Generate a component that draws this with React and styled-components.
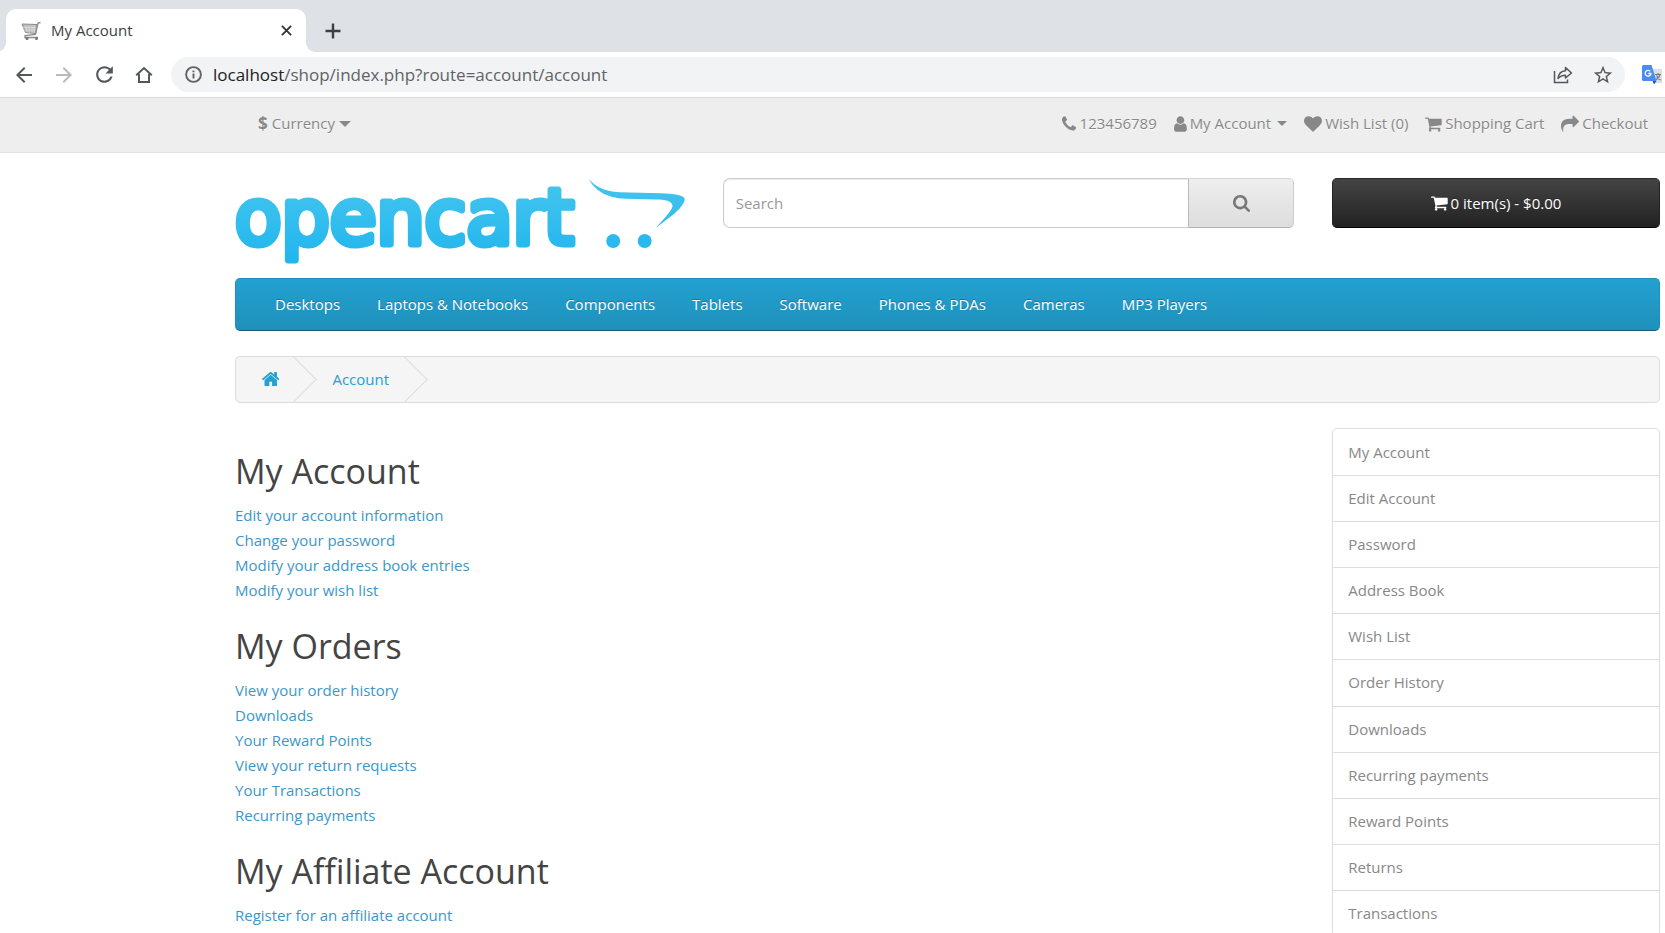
import React from 'react';
import styled, { createGlobalStyle } from 'styled-components';

const GlobalStyle = createGlobalStyle`
  *, *::before, *::after { box-sizing: border-box; }
  body {
    margin: 0;
    background: #fff;
    color: #666;
    font: 400 15px/25px "Open Sans", "Noto Sans", sans-serif;
  }
  a { color: inherit; text-decoration: none; }
  ul, ol { list-style: none; margin: 0; padding: 0; }
  button, input { font: inherit; color: inherit; }
  button { cursor: pointer; }
`;

const Window = styled.div`
  height: 100vh;
  overflow: hidden;
`;

/* ---------- browser frame ---------- */

const TabStrip = styled.div`
  display: flex;
  align-items: flex-end;
  height: 52px;
  padding-left: 6px;
  background: #dee1e6;
`;

const Tab = styled.div`
  position: relative;
  display: flex;
  align-items: center;
  width: 300px;
  height: 43px;
  padding: 0 13px 0 15px;
  border-radius: 10px 10px 0 0;
  background: #fff;
  color: #3c4043;

  &::before,
  &::after {
    content: "";
    position: absolute;
    bottom: 0;
    width: 10px;
    height: 10px;
  }
  &::before {
    left: -10px;
    background: radial-gradient(circle at 0 0, #dee1e6 10px, #fff 10px);
  }
  &::after {
    right: -10px;
    background: radial-gradient(circle at 100% 0, #dee1e6 10px, #fff 10px);
  }
`;

const TabTitle = styled.span`
  flex: 1;
  padding: 0 0 2px 10px;
  font: 400 15px/20px "Open Sans", sans-serif;
`;

const ChromeButton = styled.button`
  display: flex;
  align-items: center;
  justify-content: center;
  width: ${(p) => p.$width || 40}px;
  height: ${(p) => p.$height || 40}px;
  padding: 0;
  border: 0;
  background: none;
  color: ${(p) => (p.$faded ? '#b8babd' : '#54575b')};
`;

const Toolbar = styled.div`
  display: flex;
  align-items: center;
  height: 46px;
  padding: 0 0 0 4px;
  border-bottom: 1px solid #d9dadc;
  background: #fff;
`;

const AddressBar = styled.div`
  display: flex;
  flex: 1;
  align-items: center;
  height: 35px;
  margin-left: 7px;
  padding: 0 2px 0 14px;
  border-radius: 18px;
  background: #f1f3f4;
  color: #5f6368;
`;

const AddressField = styled.div`
  flex: 1;
  margin-left: 11px;
  font: 400 17px/24px "Open Sans", sans-serif;
  strong { font-weight: 400; color: #202124; }
`;

const Extension = styled.div`
  display: flex;
  width: 40px;
  padding-left: 17px;
`;

/* ---------- store: top bar ---------- */

const Inset = styled.div`
  padding: 0 5px 0 235px;
`;

const TopBar = styled.nav`
  height: 55px;
  border-bottom: 1px solid #e2e2e2;
  background: #eee;
  color: #888;
  text-shadow: 0 1px 0 #fff;
`;

const TopBarRow = styled(Inset)`
  display: flex;
  justify-content: space-between;
  padding-top: 13px;
`;

const CurrencyButton = styled.button`
  display: flex;
  align-items: center;
  gap: 4px;
  height: 25px;
  padding: 0 23px;
  border: 0;
  background: none;
  text-shadow: inherit;
  strong { font-size: 17px; }
`;

const TopLinks = styled.ul`
  display: flex;
  gap: 17px;
  padding-right: 12px;
`;

const TopLink = styled.a`
  display: flex;
  align-items: center;
  gap: 3px;
`;

const Caret = styled.span`
  margin-left: ${(p) => (p.$large ? 0 : 3)}px;
  border: ${(p) => (p.$large ? 6 : 5)}px solid transparent;
  border-top-color: currentColor;
  border-bottom: 0;
`;

const Glyph = styled.svg`
  display: block;
  flex: none;
  height: ${(p) => p.$size}px;
  fill: currentColor;
`;

/* ---------- store: header ---------- */

const Grid = styled.div`
  display: grid;
  grid-template-columns: repeat(12, minmax(0, 1fr));
  column-gap: 38px;
`;

const Column = styled.div`
  grid-column: span ${(p) => p.$span};
`;

const Header = styled(Grid)`
  padding-top: 25px;
  height: 125px;
`;

const LogoLink = styled.a`
  display: block;
  svg { display: block; width: 100%; overflow: visible; }
  text {
    font-family: "DejaVu Sans", sans-serif;
    font-size: 76px;
  }
`;

const SearchForm = styled.form`
  display: flex;
  height: 50px;
`;

const SearchInput = styled.input`
  flex: 1;
  min-width: 0;
  padding: 0 12px;
  border: 1px solid #ccc;
  border-right: 0;
  border-radius: 7px 0 0 7px;
  outline: 0;
  background: #fff;
  box-shadow: inset 0 1px 1px rgba(0, 0, 0, 0.08);
  &::placeholder { color: #999; opacity: 1; }
`;

const SearchButton = styled.button`
  display: flex;
  align-items: center;
  justify-content: center;
  width: 106px;
  border: 1px solid;
  border-color: #d6d6d6 #ccc #b3b3b3 #bbb;
  border-radius: 0 5px 5px 0;
  background: linear-gradient(#eee, #ddd);
  color: #777;
`;

const CartButton = styled.button`
  display: flex;
  align-items: center;
  justify-content: center;
  gap: 3px;
  width: 100%;
  height: 50px;
  border: 1px solid;
  border-color: #2b2b2b #222 #040404;
  border-radius: 5px;
  background: linear-gradient(#444, #222);
  color: #fff;
  text-shadow: 0 -1px 0 rgba(0, 0, 0, 0.25);
`;

/* ---------- store: navigation ---------- */

const Menu = styled.nav`
  height: 53px;
  border: 1px solid;
  border-color: #1f90bb #1f90bb #145e7a;
  border-radius: 5px;
  background: linear-gradient(#23a1d1, #1f90bb);
  color: #fff;
  text-shadow: 0 -1px 0 rgba(0, 0, 0, 0.25);
  ul {
    display: flex;
    gap: 37px;
    padding: 13px 39px;
  }
`;

const Breadcrumb = styled.nav`
  margin: 25px 0;
  border: 1px solid #ddd;
  border-radius: 5px;
  background: #f5f5f5;
  color: #23a1d1;
  overflow: hidden;
  ol { display: flex; height: 45px; }
`;

const Crumb = styled.li`
  position: relative;
  display: flex;
  align-items: center;
  padding: 0 ${(p) => (p.$first ? 25 : 26)}px 0 ${(p) => (p.$first ? 26 : 28)}px;

  svg { margin-bottom: 2px; }

  &::after {
    content: "";
    position: absolute;
    top: 6px;
    right: -6px;
    width: 33px;
    height: 33px;
    border: 1px solid #ddd;
    border-bottom: 0;
    border-left: 0;
    transform: rotate(45deg);
  }
`;

/* ---------- store: content ---------- */

const SectionTitle = styled.h2`
  margin: 25px 0 13px;
  color: #444;
  font-size: 34px;
  font-weight: 400;
  line-height: 37px;
`;

const LinkList = styled.ul`
  color: #3b97c9;
`;

const SideList = styled.ul`
  display: grid;
  grid-template-rows: repeat(11, 1fr);
  min-height: 509px;
  border: 1px solid #ddd;
  border-radius: 5px;
  color: #888;
`;

const SideItem = styled.li`
  display: flex;
  align-items: center;
  padding: 0 15px;
  & + & { border-top: 1px solid #ddd; }
`;

const glyphs = {
  phone: {
    box: '192 0 1408 1792',
    d: 'M1600 1240q0 27-10 70.5t-21 68.5q-21 50-122 106-94 51-186 51-27 0-53-3.5t-57.5-12.5-47-14.5-55.5-20.5-49-18q-98-35-175-83-127-79-264-216t-216-264q-48-77-83-175-3-9-18-49t-20.5-55.5-14.5-47-12.5-57.5-3.5-53q0-92 51-186 56-101 106-122 25-11 68.5-21t70.5-10q14 0 21 3 18 6 53 76 11 19 30 54t35 63.5 31 53.5q3 4 17.5 25t21.5 35.5 7 28.5q0 20-28.5 50t-62 55-62 53-28.5 46q0 9 5 22.5t8.5 20.5 14 24 11.5 19q76 137 174 235t235 174q2 1 19 11.5t24 14 20.5 8.5 22.5 5q18 0 46-28.5t53-62 55-62 50-28.5q14 0 28.5 7t35.5 21.5 25 17.5q25 15 53.5 31t63.5 35 54 30q70 35 76 53 3 7 3 21z',
  },
  user: {
    box: '256 0 1280 1792',
    d: 'M1536 1399q0 109-62.5 187t-150.5 78h-854q-88 0-150.5-78t-62.5-187q0-85 8.5-160.5t31.5-152 58.5-131 94-89 134.5-34.5q131 128 313 128t313-128q76 0 134.5 34.5t94 89 58.5 131 31.5 152 8.5 160.5zm-256-887q0 159-112.5 271.5t-271.5 112.5-271.5-112.5-112.5-271.5 112.5-271.5 271.5-112.5 271.5 112.5 112.5 271.5z',
  },
  heart: {
    box: '0 0 1792 1792',
    d: 'M896 1664q-26 0-44-18l-624-602q-10-8-27.5-26t-55.5-65.5-68-97.5-53.5-121-23.5-138q0-220 127-344t351-124q62 0 126.5 21.5t120 58 95.5 68.5 76 68q36-36 76-68t95.5-68.5 120-58 126.5-21.5q224 0 351 124t127 344q0 221-229 450l-623 600q-18 18-44 18z',
  },
  cart: {
    box: '64 0 1664 1792',
    d: 'M704 1536q0 52-38 90t-90 38-90-38-38-90 38-90 90-38 90 38 38 90zm896 0q0 52-38 90t-90 38-90-38-38-90 38-90 90-38 90 38 38 90zm128-1088v512q0 24-16.5 42.5t-40.5 21.5l-1044 122q13 60 13 70 0 16-24 64h920q26 0 45 19t19 45-19 45-45 19h-1024q-26 0-45-19t-19-45q0-11 8-31.5t16-36 21.5-40 15.5-29.5l-177-823h-204q-26 0-45-19t-19-45 19-45 45-19h256q16 0 28.5 6.5t19.5 15.5 13 24.5 8 26 5.5 29.5 4.5 26h1201q26 0 45 19t19 45z',
  },
  share: {
    box: '0 0 1792 1792',
    d: 'M1792 640q0 26-19 45l-512 512q-19 19-45 19t-45-19-19-45v-256h-224q-98 0-175.5 6t-154 21.5-133 42.5-105.5 69.5-80 101-48.5 138.5-17.5 181q0 55 5 123 0 6 2.5 23.5t2.5 26.5q0 15-8.5 25t-23.5 10q-16 0-28-17-7-9-13-22t-13.5-30-10.5-24q-127-285-127-451 0-199 53-333 162-403 875-403h224v-256q0-26 19-45t45-19 45 19l512 512q19 19 19 45z',
  },
  search: {
    box: '64 128 1664 1664',
    d: 'M1216 832q0-185-131.5-316.5t-316.5-131.5-316.5 131.5-131.5 316.5 131.5 316.5 316.5 131.5 316.5-131.5 131.5-316.5zm512 832q0 52-38 90t-90 38q-54 0-90-38l-343-342q-179 124-399 124-143 0-273.5-55.5t-225-150-150-225-55.5-273.5 55.5-273.5 150-225 225-150 273.5-55.5 273.5 55.5 225 150 150 225 55.5 273.5q0 220-124 399l343 343q37 37 37 90z',
  },
  home: {
    box: '89 64 1614 1664',
    d: 'M1472 992v480q0 26-19 45t-45 19h-384v-384h-256v384h-384q-26 0-45-19t-19-45v-480q0-1 .5-3t.5-3l575-474 575 474q1 2 1 6zm223-69l-62 74q-8 9-21 11h-3q-13 0-21-7l-692-577-692 577q-12 8-24 7-13-2-21-11l-62-74q-8-10-7-23.5t11-21.5l719-599q32-26 76-26t76 26l244 204v-195q0-14 9-23t23-9h192q14 0 23 9t9 23v408l219 182q10 8 11 21.5t-7 23.5z',
  },
};

const Icon = ({ name, size = 18 }) => (
  <Glyph $size={size} viewBox={glyphs[name].box} aria-hidden="true">
    <path d={glyphs[name].d} />
  </Glyph>
);

const Favicon = () => (
  <svg width="20" height="20" viewBox="0 0 20 20" fill="none" aria-hidden="true">
    <path d="M1 3 16 3.500 14.500 12.500 4.500 11.500Z" fill="#bdbdbd" stroke="#8b8b8b" />
    <path d="M2 6.500h13M3 9h12M5 4.500l1 7M8 4.500l.5 7.500M11 4.500v7.500M13.500 4.500 13 12" stroke="#e2e2e2" strokeWidth=".6" />
    <path d="M19.500 1.500 17 2 14.500 13.500 4 14.500 4 16.500H17" stroke="#8d8d8d" strokeWidth="1.300" />
    <circle cx="6" cy="17.500" r="1.500" fill="#777" />
    <circle cx="15.500" cy="17.500" r="1.500" fill="#777" />
  </svg>
);

const CloseIcon = () => (
  <svg width="11" height="11" viewBox="0 0 12 12" stroke="#303236" strokeWidth="2" aria-hidden="true">
    <path d="M1 1 11 11M11 1 1 11" />
  </svg>
);

const PlusIcon = () => (
  <svg width="16" height="16" viewBox="0 0 16 16" stroke="#3c4043" strokeWidth="2.400" aria-hidden="true">
    <path d="M8 .5V15.500M.5 8H15.500" />
  </svg>
);

const BackIcon = () => (
  <svg width="24" height="24" viewBox="0 0 24 24" fill="currentColor" aria-hidden="true">
    <path d="M20 11H7.830l5.590-5.590L12 4l-8 8 8 8 1.410-1.410L7.830 13H20v-2z" />
  </svg>
);

const ForwardIcon = () => (
  <svg width="24" height="24" viewBox="0 0 24 24" fill="currentColor" aria-hidden="true">
    <path d="M12 4l-1.410 1.410L16.170 11H4v2h12.170l-5.580 5.590L12 20l8-8z" />
  </svg>
);

const ReloadIcon = () => (
  <svg width="25" height="25" viewBox="0 0 24 24" fill="currentColor" aria-hidden="true">
    <path d="M17.650 6.350C16.200 4.900 14.210 4 12 4c-4.420 0-7.990 3.580-7.990 8s3.570 8 7.990 8c3.730 0 6.840-2.550 7.730-6h-2.080c-.82 2.330-3.040 4-5.650 4-3.310 0-6-2.690-6-6s2.690-6 6-6c1.660 0 3.140.69 4.220 1.780L13 11h7V4l-2.350 2.350z" />
  </svg>
);

const HomeIcon = () => (
  <svg width="18" height="18" viewBox="0 0 18 18" fill="none" stroke="currentColor" strokeWidth="2" aria-hidden="true">
    <path d="M1.200 9.300 9 2l7.800 7.300M4 8V16H14V8" />
  </svg>
);

const InfoIcon = () => (
  <svg width="17" height="17" viewBox="0 0 17 17" fill="none" stroke="currentColor" strokeWidth="1.900" aria-hidden="true">
    <circle cx="8.500" cy="8.500" r="7.400" />
    <path d="M8.500 7.500V12.500M8.500 4.500V6.300" />
  </svg>
);

const SharePageIcon = () => (
  <svg width="20" height="18" viewBox="0 0 20 18" fill="none" stroke="currentColor" strokeWidth="1.500" aria-hidden="true">
    <path d="M1.500 5V16.500H14.500V13.500" />
    <path d="M5 12.500C5.500 8 8 5 12.500 4.700V1.500L18.500 7 12.500 12V9.200C9 9.200 6.800 10.300 5 12.500Z" strokeLinejoin="round" />
  </svg>
);

const StarIcon = () => (
  <svg width="22" height="22" viewBox="0 0 24 24" fill="currentColor" aria-hidden="true">
    <path d="M22 9.240l-7.190-.62L12 2 9.190 8.630 2 9.240l5.460 4.730L5.820 21 12 17.270 18.180 21l-1.630-7.030L22 9.240zM12 15.400l-3.760 2.270 1-4.280-3.320-2.880 4.380-.38L12 6.100l1.710 4.040 4.380.38-3.320 2.880 1 4.280L12 15.400z" />
  </svg>
);

const TranslateIcon = () => (
  <svg width="20" height="20" viewBox="0 0 20 20" aria-hidden="true">
    <path d="M9 4H20V18H13Z" fill="#dcdfe3" />
    <path d="M13 9.500H19M16 8V9.500M18 9.500C17.500 12 15.500 14 13.500 15M14.500 10.500C15.200 12.500 17 14.300 18.700 15" fill="none" stroke="#6f7b8b" strokeWidth="1.200" />
    <path d="M1.500 0H9.500L14.500 16H1.500Q0 16 0 14.500V1.500Q0 0 1.500 0Z" fill="#4a8af4" />
    <path d="M10.500 16H14.500L12 19.500Z" fill="#2456c5" />
    <path d="M8.300 6.300A2.900 2.900 0 1 0 9 8.500H6.300" fill="none" stroke="#fff" strokeWidth="1.300" />
  </svg>
);

const Logo = () => (
  <svg viewBox="0 0 450 90" role="img" aria-label="opencart">
    <defs>
      <linearGradient id="logo-blue" gradientUnits="userSpaceOnUse" x1="0" y1="0" x2="0" y2="88">
        <stop offset="0" stopColor="#45c5ee" />
        <stop offset="1" stopColor="#1fb5ee" />
      </linearGradient>
    </defs>
    <text
      x="0"
      y="66"
      fill="url(#logo-blue)"
      stroke="url(#logo-blue)"
      strokeWidth="7"
      strokeLinejoin="round"
      strokeLinecap="round"
    >
      opencart
    </text>
    <g fill="url(#logo-blue)">
      <path d="M354 1C361 9 370 13.500 385 14.300L426 15.200C440 15.500 448 17 450 20.500C450.500 24 447 29 440 35.500L421 50C429 41 437 33 438 28C437 23 431 21.500 421 21.500L391 20.800C371 20 360 12 354 1Z" />
      <circle cx="378.500" cy="63" r="7" />
      <circle cx="410" cy="63" r="7" />
    </g>
  </svg>
);

const categories = [
  'Desktops', 'Laptops & Notebooks', 'Components', 'Tablets',
  'Software', 'Phones & PDAs', 'Cameras', 'MP3 Players',
];

const sections = [
  {
    title: 'My Account',
    links: ['Edit your account information', 'Change your password', 'Modify your address book entries', 'Modify your wish list'],
  },
  {
    title: 'My Orders',
    links: ['View your order history', 'Downloads', 'Your Reward Points', 'View your return requests', 'Your Transactions', 'Recurring payments'],
  },
  { title: 'My Affiliate Account', links: ['Register for an affiliate account'] },
];

const sideLinks = [
  'My Account', 'Edit Account', 'Password', 'Address Book', 'Wish List', 'Order History',
  'Downloads', 'Recurring payments', 'Reward Points', 'Returns', 'Transactions',
];

const topLinks = [
  { icon: 'phone', label: '123456789' },
  { icon: 'user', label: 'My Account', caret: true },
  { icon: 'heart', label: 'Wish List (0)' },
  { icon: 'cart', label: 'Shopping Cart' },
  { icon: 'share', label: 'Checkout' },
];

const BrowserFrame = () => (
  <header>
    <TabStrip>
      <Tab>
        <Favicon />
        <TabTitle>My Account</TabTitle>
        <ChromeButton $width={14} $height={14} aria-label="Close tab"><CloseIcon /></ChromeButton>
      </Tab>
      <ChromeButton $width={54} $height={43} aria-label="New tab"><PlusIcon /></ChromeButton>
    </TabStrip>
    <Toolbar>
      <ChromeButton aria-label="Back"><BackIcon /></ChromeButton>
      <ChromeButton $faded aria-label="Forward"><ForwardIcon /></ChromeButton>
      <ChromeButton aria-label="Reload"><ReloadIcon /></ChromeButton>
      <ChromeButton aria-label="Home"><HomeIcon /></ChromeButton>
      <AddressBar>
        <InfoIcon />
        <AddressField><strong>localhost</strong>/shop/index.php?route=account/account</AddressField>
        <ChromeButton aria-label="Share this page"><SharePageIcon /></ChromeButton>
        <ChromeButton aria-label="Bookmark this tab"><StarIcon /></ChromeButton>
      </AddressBar>
      <Extension><TranslateIcon /></Extension>
    </Toolbar>
  </header>
);

export default function App() {
  return (
    <Window>
      <GlobalStyle />
      <BrowserFrame />
      <TopBar>
        <TopBarRow>
          <CurrencyButton type="button">
            <strong>$</strong>
            <span>Currency</span>
            <Caret $large />
          </CurrencyButton>
          <TopLinks>
            {topLinks.map(({ icon, label, caret }) => (
              <li key={label}>
                <TopLink href="#">
                  <Icon name={icon} />
                  <span>{label}</span>
                  {caret && <Caret />}
                </TopLink>
              </li>
            ))}
          </TopLinks>
        </TopBarRow>
      </TopBar>
      <Inset>
        <Header as="header">
          <Column $span={4}>
            <LogoLink href="#"><Logo /></LogoLink>
          </Column>
          <Column $span={5}>
            <SearchForm role="search">
              <SearchInput type="text" placeholder="Search" aria-label="Search" />
              <SearchButton type="button" aria-label="Search"><Icon name="search" size={17} /></SearchButton>
            </SearchForm>
          </Column>
          <Column $span={3}>
            <CartButton type="button">
              <Icon name="cart" />
              <span>0 item(s) - $0.00</span>
            </CartButton>
          </Column>
        </Header>
        <Menu>
          <ul>
            {categories.map((name) => <li key={name}><a href="#">{name}</a></li>)}
          </ul>
        </Menu>
        <Breadcrumb aria-label="Breadcrumb">
          <ol>
            <Crumb $first><a href="#" aria-label="Home"><Icon name="home" /></a></Crumb>
            <Crumb><a href="#">Account</a></Crumb>
          </ol>
        </Breadcrumb>
        <Grid>
          <Column as="main" $span={9}>
            {sections.map(({ title, links }) => (
              <section key={title}>
                <SectionTitle>{title}</SectionTitle>
                <LinkList>
                  {links.map((label) => <li key={label}><a href="#">{label}</a></li>)}
                </LinkList>
              </section>
            ))}
          </Column>
          <Column as="aside" $span={3}>
            <SideList>
              {sideLinks.map((label) => <SideItem key={label}><a href="#">{label}</a></SideItem>)}
            </SideList>
          </Column>
        </Grid>
      </Inset>
    </Window>
  );
}
